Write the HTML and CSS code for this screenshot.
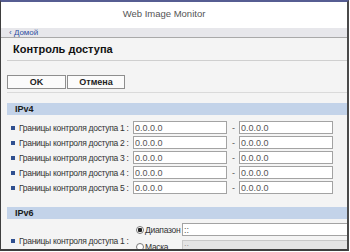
FILE: index.html
```html
<!DOCTYPE html>
<html lang="ru">
<head>
    <meta charset="UTF-8">
    <meta name="viewport" content="width=device-width, initial-scale=1.0">
    <title>Web Image Monitor - Контроль доступа</title>
    <link rel="stylesheet" href="styles.css">
</head>
<body>
    <div class="window">
        <div class="header">Web Image Monitor</div>
        <div class="crumb"><a href="#">‹ Домой</a></div>

        <div class="content">
            <h1 class="title">Контроль доступа</h1>

            <div class="actions">
                <button class="btn">OK</button>
                <button class="btn">Отмена</button>
            </div>

            <div class="section">
                <div class="section-head">IPv4</div>
                <div class="rows">
                    <div class="row">
                        <span class="label">Границы контроля доступа 1 :</span>
                        <input class="field" type="text" value="0.0.0.0">
                        <span class="dash">-</span>
                        <input class="field" type="text" value="0.0.0.0">
                    </div>
                    <div class="row">
                        <span class="label">Границы контроля доступа 2 :</span>
                        <input class="field" type="text" value="0.0.0.0">
                        <span class="dash">-</span>
                        <input class="field" type="text" value="0.0.0.0">
                    </div>
                    <div class="row">
                        <span class="label">Границы контроля доступа 3 :</span>
                        <input class="field" type="text" value="0.0.0.0">
                        <span class="dash">-</span>
                        <input class="field" type="text" value="0.0.0.0">
                    </div>
                    <div class="row">
                        <span class="label">Границы контроля доступа 4 :</span>
                        <input class="field" type="text" value="0.0.0.0">
                        <span class="dash">-</span>
                        <input class="field" type="text" value="0.0.0.0">
                    </div>
                    <div class="row">
                        <span class="label">Границы контроля доступа 5 :</span>
                        <input class="field" type="text" value="0.0.0.0">
                        <span class="dash">-</span>
                        <input class="field" type="text" value="0.0.0.0">
                    </div>
                </div>
            </div>

            <div class="section section-v6">
                <div class="section-head">IPv6</div>
                <div class="row6">
                    <span class="label">Границы контроля доступа 1 :</span>
                    <div class="choices">
                        <div class="choice">
                            <span class="radio checked"></span>
                            <span class="choice-name">Диапазон</span>
                            <input class="field wide" type="text" value="::">
                        </div>
                        <div class="choice">
                            <span class="radio"></span>
                            <span class="choice-name">Маска</span>
                            <input class="field wide" type="text" value="::" disabled>
                        </div>
                    </div>
                </div>
            </div>
        </div>
    </div>
</body>
</html>
```

FILE: styles.css
```css
body {
    margin: 0;
    background: #ffffff;
    font-family: "Liberation Sans", Arial, sans-serif;
}
.window {
    width: 346px;
    height: 247px;
    border-top: 2px solid #565d92;
    border-left: 1px solid #3e3e3e;
    border-right: 2px solid #4a4a4a;
    border-bottom: 2px solid #3e3e3e;
    background: #f4f4f4;
    overflow: hidden;
}
.header {
    height: 21px;
    padding: 5px 20px 0 0;
    background: #ffffff;
    text-align: center;
    font-size: 9.5px;
    line-height: 14px;
    color: #555555;
}
.crumb {
    height: 9px;
    background: #e7e7eb;
    border-bottom: 1px solid #a9a9a9;
    padding-left: 8px;
    font-size: 8px;
    line-height: 10px;
}
.crumb a {
    color: #2f4f9f;
    text-decoration: none;
}
.title {
    margin: 0 0 0 6px;
    padding: 5px 0 4px 6px;
    border-bottom: 1px solid #cfcfcf;
    font-size: 11px;
    line-height: 13px;
    color: #111111;
}
.actions {
    display: flex;
    margin: 14px 0 0 6px;
    padding-bottom: 3px;
    border-bottom: 1px solid #dadada;
}
.btn {
    height: 14px;
    padding: 0;
    border: 1px solid #8e8e8e;
    background: #fbfbfb;
    font-family: "Liberation Sans", Arial, sans-serif;
    font-size: 9px;
    font-weight: bold;
    color: #222222;
}
.btn:first-child {
    width: 59px;
    margin-right: 1px;
}
.btn:last-child {
    width: 58px;
}
.section {
    margin-left: 6px;
}
.section-head {
    margin-top: 10px;
    height: 12px;
    padding-left: 8px;
    background: #c3d3e9;
    font-size: 9px;
    font-weight: bold;
    line-height: 13px;
    color: #1a1a1a;
}
.section-v6 .section-head {
    margin-top: 12px;
}
.rows {
    padding-top: 5px;
}
.row {
    display: grid;
    grid-template-columns: 126px 94px 12px 94px;
    align-items: center;
    height: 15px;
}
.label {
    display: flex;
    align-items: center;
    padding-left: 4px;
    font-size: 8.5px;
    letter-spacing: -0.3px;
    color: #333333;
    white-space: nowrap;
}
.label::before {
    content: "";
    flex-shrink: 0;
    width: 4px;
    height: 4px;
    margin-right: 4px;
    background: #2f4f8f;
}
.field {
    box-sizing: border-box;
    height: 13px;
    margin: 0;
    padding: 0 1px;
    border: 1px solid #a3a3a3;
    background: #ffffff;
    font-family: "Liberation Sans", Arial, sans-serif;
    font-size: 9px;
    color: #555555;
}
.dash {
    padding-left: 5px;
    font-size: 9px;
    color: #555555;
}
.row6 {
    display: flex;
    align-items: center;
    margin-top: 4px;
}
.row6 .label {
    width: 122px;
    flex-shrink: 0;
    padding-top: 6px;
}
.choices {
    display: flex;
    flex-direction: column;
    gap: 4px;
}
.choice {
    display: flex;
    align-items: center;
    height: 13px;
}
.radio {
    box-sizing: border-box;
    flex-shrink: 0;
    width: 8px;
    height: 8px;
    margin: 0 1px 0 3px;
    border: 1px solid #7a7a7a;
    border-radius: 50%;
    background: #ffffff;
}
.radio.checked {
    background: radial-gradient(circle, #222222 0 2px, #ffffff 2.5px);
}
.choice-name {
    width: 37px;
    flex-shrink: 0;
    font-size: 8.5px;
    letter-spacing: -0.3px;
    color: #333333;
    white-space: nowrap;
}
.field.wide {
    width: 180px;
}
.field:disabled {
    background: #e4e4e4;
    border-color: #c8c8c8;
    color: #9a9a9a;
}
```
